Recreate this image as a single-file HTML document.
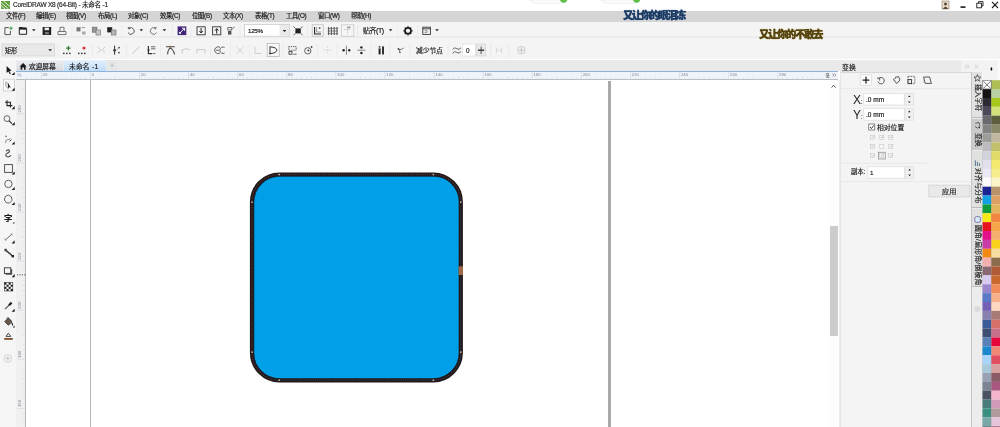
<!DOCTYPE html>
<html lang="zh-CN">
<head>
<meta charset="utf-8">
<title>CorelDRAW X8 (64-Bit) - 未命名 -1</title>
<style>
*{box-sizing:border-box;margin:0;padding:0}
html,body{width:1000px;height:427px;overflow:hidden;background:#fff}
body{position:relative;font-family:"Liberation Sans","Noto Sans CJK SC",sans-serif;font-size:7px;color:#222;line-height:1}
.abs{position:absolute}
.t{position:absolute;white-space:nowrap;line-height:1;will-change:transform;-webkit-text-stroke:0.18px currentColor}
#titlebar{left:0;top:0;width:1000px;height:11px;background:#fff}
#menubar{left:0;top:10.6px;width:1000px;height:11.3px;background:#d5d5d5}
#toolbar{left:0;top:21.9px;width:1000px;height:14.6px;background:#f4f4f4}
#propbar{left:0;top:36.4px;width:1000px;height:23.1px;background:#f4f4f4;border-top:2.4px solid #ececec}
#tabrow{left:0;top:59.5px;width:1000px;height:11.5px;background:#e9e9e9}
#toolbox{left:0;top:59.5px;width:16.4px;height:368px;background:#f5f5f5}
#hruler{left:16.4px;top:70.6px;width:821.6px;height:9.4px;background:#eef4fa;border-top:1.1px solid #8fb3d6;border-bottom:0.8px solid #bdbdbd}
#vruler{left:16.4px;top:80px;width:9.6px;height:347px;background:#f0f0f1;border-right:0.9px solid #b6b6b6}
#canvas{left:25.6px;top:80.2px;width:803.4px;height:347px;background:#fff}
#vscroll{left:829px;top:80px;width:11px;height:347px;background:#fdfdfd;border-right:1.4px solid #ececec}
#panel{left:840px;top:60px;width:132px;height:367px;background:#f3f3f3}
#sidetabs{left:972px;top:60px;width:10px;height:367px;background:#e2e2e2}
#palette{left:982px;top:60px;width:18px;height:367px;background:#f0f0f0}
.mi{top:12.6px;font-size:6.3px;letter-spacing:-0.25px;color:#1a1a1a}
.ic{position:absolute}
.vt{transform-origin:0 0;transform:rotate(90deg);font-size:6.8px;color:#222;letter-spacing:0;line-height:8px}
</style>
</head>
<body>
<div id="titlebar" class="abs"></div>
<div id="menubar" class="abs"></div>
<div id="toolbar" class="abs"></div>
<div id="propbar" class="abs"></div>
<div id="tabrow" class="abs"></div>
<div id="toolbox" class="abs"></div>
<div id="hruler" class="abs"></div>
<div id="vruler" class="abs"></div>
<div id="canvas" class="abs"></div>
<div id="vscroll" class="abs"></div>

<!-- TITLE -->
<svg class="ic" style="left:1px;top:1px" width="9" height="8" viewBox="0 0 9 8"><rect width="9" height="8" fill="#5f9e3c"/><path d="M0 1.5 L7.5 8 M0 4.5 L4 8 M2.5 0 L9 5.5" stroke="#e9f3df" stroke-width="1" fill="none"/></svg>
<div class="t" style="left:13px;top:2px;font-size:6.5px;letter-spacing:-0.2px;color:#2a2a2a">CorelDRAW X8 (64-Bit) - 未命名 -1</div>
<!-- window controls -->
<svg class="ic" style="left:935px;top:0" width="65" height="11" viewBox="935 0 65 11">
<rect x="942" y="1" width="7" height="8" fill="#e9dcc8" stroke="#8a7a66" stroke-width="0.6"/><circle cx="945.5" cy="4" r="1.5" fill="#5a4636"/><path d="M943 9 Q945.5 4.5 948 9Z" fill="#5a4636"/>
<rect x="960.5" y="6.3" width="5" height="1.6" fill="#1a1a1a"/>
<rect x="976.8" y="3.2" width="4.6" height="4.6" fill="none" stroke="#1a1a1a" stroke-width="0.9"/><path d="M978.6 3 V1.6 H983 V6 H981.6" fill="none" stroke="#1a1a1a" stroke-width="0.9"/>
<path d="M992 1.8 L998 8 M998 1.8 L992 8" stroke="#1a1a1a" stroke-width="1.1" fill="none"/>
</svg>
<!-- top floating widgets -->
<svg class="ic" style="left:525px;top:0" width="120" height="5" viewBox="525 0 120 5">
<path d="M530 0 Q531 3 535 3 H562 Q566.5 3 567.5 0Z" fill="#fff" stroke="#eaeaea" stroke-width="0.9"/>
<path d="M601 0 Q602 3 606 3 H635 Q639 3 640 0Z" fill="#fff" stroke="#eaeaea" stroke-width="0.9"/>
<circle cx="563.6" cy="-0.6" r="3.4" fill="#5cbf4a"/><circle cx="636.6" cy="-0.6" r="3.4" fill="#5cbf4a"/>
</svg>

<!-- MENU -->
<div class="t mi" style="left:5.5px">文件(F)</div>
<div class="t mi" style="left:35.8px">编辑(E)</div>
<div class="t mi" style="left:66.2px">视图(V)</div>
<div class="t mi" style="left:97.5px">布局(L)</div>
<div class="t mi" style="left:128px">对象(C)</div>
<div class="t mi" style="left:160px">效果(C)</div>
<div class="t mi" style="left:192px">位图(B)</div>
<div class="t mi" style="left:223px">文本(X)</div>
<div class="t mi" style="left:255px">表格(T)</div>
<div class="t mi" style="left:286px">工具(O)</div>
<div class="t mi" style="left:318px">窗口(W)</div>
<div class="t mi" style="left:351px">帮助(H)</div>
<!-- lyric overlays -->
<div class="t" style="left:623px;top:10.8px;font-size:10.2px;font-weight:900;color:#1d3a62;text-shadow:0 0 0.8px #24507e,0 0 2px #dfe8f4;letter-spacing:-1.35px">又让你的眼泪冻</div>
<div class="t" style="left:759.2px;top:29.8px;font-size:10.2px;font-weight:900;color:#54430f;text-shadow:0 0 0.8px #6a5a1e,0 0 2px #f4ecc0;letter-spacing:-1.15px">又让你的不敢去</div>

<!-- TOOLBARS -->
<!--TBS-->
<svg class="ic" style="left:0;top:21px" width="1000" height="40" viewBox="0 21 1000 40">
<g fill="none" stroke-linecap="butt">
<!-- grips -->
<!-- row1 -->
<!-- new -->
<path d="M8.8 27.6 H4.9 V34.6 H10.4 V30.8" stroke="#444" stroke-width="0.9"/><path d="M11 26.4 V30 M9.2 28.2 H12.8" stroke="#3f9a4a" stroke-width="1"/>
<!-- open -->
<path d="M19.3 34.3 V27.6 H22.5 L23.3 28.8 H26.6 V34.3Z" stroke="#222" stroke-width="1"/><rect x="19.3" y="27.4" width="7.3" height="2.2" fill="#222" stroke="none"/>
<path d="M32 29.3 H35.6 L33.8 31.3Z" fill="#222" stroke="none"/>
<!-- save -->
<rect x="42.6" y="27" width="8.6" height="8" fill="#222" stroke="none"/><rect x="44.6" y="27.6" width="4.4" height="2.6" fill="#f0f0f0" stroke="none"/><rect x="45" y="32" width="3.8" height="2.4" fill="#777" stroke="none"/>
<!-- print -->
<path d="M58 31.5 H66 V34.6 H58Z M60 31.3 V27.3 H64 V31.3" stroke="#666" stroke-width="0.9"/>
<!-- cut/copy/paste -->
<rect x="76.5" y="27.2" width="4" height="4.2" fill="#777" stroke="none"/><rect x="82" y="31.5" width="3.6" height="3" fill="#aaa" stroke="none"/><path d="M81.5 27.6 H85" stroke="#888" stroke-width="0.8"/>
<rect x="92.3" y="27.2" width="4.6" height="5" fill="#999" stroke="#666" stroke-width="0.7"/><rect x="96" y="30" width="4.4" height="5" fill="#c8c8c8" stroke="#777" stroke-width="0.7"/>
<rect x="107.2" y="27.2" width="5" height="5.2" fill="#222" stroke="none"/><rect x="111.4" y="30" width="4.6" height="5" fill="#b5b5b5" stroke="#777" stroke-width="0.7"/>
<!-- undo/redo -->
<path d="M129.2 28.2 A3.3 3.3 0 1 1 128 32.6" stroke="#555" stroke-width="1"/><path d="M127.5 27 L130.6 27.4 L129 29.8Z" fill="#555" stroke="none"/>
<path d="M139.5 29.3 H143.1 L141.3 31.3Z" fill="#222" stroke="none"/>
<path d="M155.3 28.2 A3.3 3.3 0 1 0 156.5 32.6" stroke="#777" stroke-width="1"/><path d="M157 27 L153.9 27.4 L155.5 29.8Z" fill="#777" stroke="none"/>
<path d="M162.6 29.3 H166.2 L164.4 31.3Z" fill="#222" stroke="none"/>
<!-- purple -->
<rect x="177.6" y="26.4" width="8.7" height="8.7" fill="#43267a" stroke="none"/><path d="M179.6 33.2 L184.4 28.4 M182 28.2 H184.6 V30.8" stroke="#fff" stroke-width="1"/><rect x="179.2" y="32" width="1.8" height="1.8" fill="#fff" stroke="none"/>
<!-- import / export -->
<rect x="197" y="26.8" width="8.2" height="8" stroke="#333" stroke-width="0.9"/><path d="M201.1 28 V32.6 M199.4 31 L201.1 33 L202.8 31" stroke="#222" stroke-width="1"/>
<rect x="212.6" y="26.8" width="8.2" height="8" stroke="#333" stroke-width="0.9"/><path d="M216.7 33.6 V29 M215 30.6 L216.7 28.6 L218.4 30.6" stroke="#222" stroke-width="1"/>
<!-- pdf -->
<rect x="227.8" y="27.6" width="4" height="2.4" stroke="#555" stroke-width="0.8"/><rect x="228" y="31" width="3.4" height="3.6" fill="#555" stroke="none"/><path d="M232.5 28.6 L234.6 27" stroke="#555" stroke-width="0.9"/>
<!-- zoom combo -->
<rect x="244.6" y="24.6" width="44.8" height="11.6" fill="#fff" stroke="#c6c6c6" stroke-width="0.7"/><rect x="279.6" y="25" width="9.5" height="10.8" fill="#e9e9e9" stroke="none"/>
<path d="M282.6 30 H286.4 L284.5 32.1Z" fill="#222" stroke="none"/>
<!-- fullscreen -->
<rect x="295.4" y="28.4" width="5.4" height="5" fill="#222" stroke="none"/><path d="M293.6 26.6 L295.4 28.4 M302.6 26.6 L300.8 28.4 M293.6 35.2 L295.4 33.4 M302.6 35.2 L300.8 33.4" stroke="#444" stroke-width="0.9"/>
<!-- snap icons -->
<rect x="312.2" y="24.8" width="11" height="11.4" fill="#f6f6f6" stroke="#b5b5b5" stroke-width="0.7"/><path d="M314.6 27 V34 H321" stroke="#222" stroke-width="1.1"/><path d="M316.6 27 V32 H321" stroke="#777" stroke-width="0.7"/><circle cx="319.6" cy="28" r="1" fill="#666" stroke="none"/>
<g stroke="#555" stroke-width="1.1"><path d="M328.6 27 V35 M331.4 27 V35 M334.2 27 V35 M337 27 V35"/></g><g stroke="#666" stroke-width="0.7"><path d="M327.6 28.4 H338 M327.6 31 H338 M327.6 33.6 H338"/></g>
<rect x="341.4" y="24.8" width="12.4" height="11.4" fill="#f6f6f6" stroke="#c2c2c2" stroke-width="0.7"/><path d="M344 29.6 H351 M347.6 27 V34.4" stroke="#b0b0b0" stroke-width="0.8" stroke-dasharray="1 0.8"/><rect x="347" y="26.6" width="3.6" height="1.6" fill="#9a9a9a" stroke="none"/>
<path d="M388.8 29.3 H392.4 L390.6 31.3Z" fill="#222" stroke="none"/>
<!-- gear -->
<circle cx="408" cy="30.8" r="3" stroke="#1a1a1a" stroke-width="1.7"/><g stroke="#1a1a1a" stroke-width="1.3"><path d="M408 26.2 V27.4 M408 34.2 V35.4 M403.4 30.8 H404.6 M411.4 30.8 H412.6 M404.8 27.6 L405.6 28.4 M411.2 27.6 L410.4 28.4 M404.8 34 L405.6 33.2 M411.2 34 L410.4 33.2"/></g>
<!-- window icon -->
<rect x="422.8" y="27.2" width="7.6" height="7.2" stroke="#333" stroke-width="0.9"/><path d="M422.8 28.8 H430.4" stroke="#333" stroke-width="0.9"/><path d="M424.6 30.6 H427 V32.4 H424.6" stroke="#555" stroke-width="0.6"/>
<path d="M435.2 29.3 H438.8 L437 31.3Z" fill="#222" stroke="none"/>
<!-- separators row1 -->
<g stroke="#e6e6e6" stroke-width="0.7"><path d="M72 25 V37 M122 25 V37 M172.5 25 V37 M191 25 V37 M240 25 V37 M307.5 25 V37 M357.5 25 V37 M397.5 25 V37 M417.5 25 V37"/></g>

<!-- row2 -->
<rect x="2" y="44" width="52.4" height="12" fill="#e9e9e9" stroke="#d0d0d0" stroke-width="0.7"/>
<path d="M48.2 49.2 H52 L50.1 51.3Z" fill="#222" stroke="none"/>
<!-- add node / delete node -->
<g fill="#3c3c3c" stroke="none"><circle cx="63.8" cy="53.3" r="0.9"/><circle cx="66.8" cy="53.3" r="0.9"/><circle cx="69.8" cy="53.3" r="0.9"/><circle cx="78.8" cy="53.3" r="0.9"/><circle cx="81.8" cy="53.3" r="0.9"/><circle cx="84.8" cy="53.3" r="0.9"/></g>
<path d="M68.4 46 V50.4 M66.2 48.2 H70.6" stroke="#2e7d32" stroke-width="1.3"/>
<circle cx="84" cy="48" r="1.6" fill="#d23a3a" stroke="none"/>
<!-- join/break -->
<path d="M97.5 47 L101 50 L97.5 53 M105 47 L102 50 L105 53" stroke="#c8c8c8" stroke-width="0.9"/>
<path d="M114.6 45.6 V54.6" stroke="#333" stroke-width="1"/><circle cx="114.6" cy="50.2" r="1.3" fill="#333" stroke="none"/><circle cx="119" cy="47.6" r="0.9" fill="#444" stroke="none"/><circle cx="119" cy="52.6" r="0.9" fill="#444" stroke="none"/><path d="M116.6 50.2 L118.6 48.4" stroke="#666" stroke-width="0.6"/>
<path d="M132.4 53.6 L139.6 46.6" stroke="#c4c4c4" stroke-width="1"/>
<path d="M148.4 46 V53.6 H152" stroke="#333" stroke-width="1.2"/><path d="M151 46.8 H155.4 M151 48.8 H155.4 M152.6 53.6 H155.4" stroke="#444" stroke-width="0.8"/><circle cx="148.6" cy="50" r="1.1" fill="#333" stroke="none"/>
<path d="M167.6 54.4 Q168 48.6 170.4 48.2 Q173 48.6 174.6 54.4 M166 46.8 H174.8" stroke="#4a4a4a" stroke-width="1.1"/><circle cx="170.4" cy="46.8" r="1" fill="#7a5a3a" stroke="none"/>
<path d="M182 53.6 V50 L186 48.6 L190 50" stroke="#c8c8c8" stroke-width="1"/>
<path d="M197 53.4 V49.6 H205 V53.4" stroke="#c8c8c8" stroke-width="1"/>
<path d="M220 47.4 A3.4 3.4 0 1 0 220 53 M224.6 47.4 A3.2 3.2 0 1 0 224.6 53 M215.8 50.2 H219" stroke="#555" stroke-width="0.9"/>
<path d="M236.6 47 L243.4 53.4 M243.4 47 L236.6 53.4" stroke="#d0d0d0" stroke-width="1"/>
<path d="M255 46.6 V53.4 H261.6" stroke="#cfcfcf" stroke-width="1"/>
<rect x="267.2" y="43.6" width="12" height="12.8" fill="#f8f8f8" stroke="#b0b0b0" stroke-width="0.7"/><path d="M270 46.4 V53.8 M270 46.8 Q277 47.4 276.8 50.2 Q276.6 53 270.4 53.6" stroke="#333" stroke-width="1"/><circle cx="270" cy="53.6" r="0.9" fill="#333" stroke="none"/>
<rect x="288.8" y="46.6" width="7.4" height="3.6" stroke="#444" stroke-width="0.8" stroke-dasharray="1.4 0.7"/><rect x="289" y="51.6" width="3" height="2.6" stroke="#333" stroke-width="0.8"/><path d="M293.4 54.2 H296.6" stroke="#444" stroke-width="0.8"/>
<circle cx="307.8" cy="50.8" r="3.2" stroke="#555" stroke-width="0.9"/><circle cx="308.4" cy="50.6" r="1" fill="#444" stroke="none"/><circle cx="311.6" cy="47" r="0.9" fill="#444" stroke="none"/>
<path d="M323 50 H332 M327.6 46.4 V53.6" stroke="#d4d4d4" stroke-width="0.9" stroke-dasharray="1.6 1"/>
<path d="M346.4 45.6 V54.8" stroke="#555" stroke-width="0.7"/><circle cx="343.6" cy="50.2" r="1.2" fill="#222" stroke="none"/><circle cx="349.2" cy="50.2" r="1.2" fill="#222" stroke="none"/>
<path d="M357.4 50.2 H365.4" stroke="#555" stroke-width="0.7"/><circle cx="361.4" cy="47.4" r="1.2" fill="#222" stroke="none"/><circle cx="361.4" cy="53" r="1.2" fill="#222" stroke="none"/>
<rect x="378.6" y="48.4" width="2" height="6" fill="#222" stroke="none"/><rect x="382" y="46.4" width="2" height="8" fill="#333" stroke="none"/><circle cx="379.6" cy="46.8" r="0.9" fill="#333" stroke="none"/>
<path d="M398 49.4 H401.4 L403.6 48 M399.6 49.4 V52.6" stroke="#555" stroke-width="0.8"/><circle cx="398.4" cy="48.8" r="0.9" fill="#444" stroke="none"/><circle cx="400" cy="52.4" r="0.8" fill="#666" stroke="none"/>
<path d="M452.6 49.6 Q454.6 46.6 456.8 48.6 T461 47.8 M452.6 53.4 Q454.6 50.4 456.8 52.4 T461 51.6" stroke="#555" stroke-width="0.9"/>
<rect x="462.6" y="44" width="13" height="12" fill="#fff" stroke="#d6d6d6" stroke-width="0.6"/>
<rect x="476.4" y="44" width="9.4" height="12" fill="#e8e8e8" stroke="#cfcfcf" stroke-width="0.6"/><path d="M478 50.2 H484.2" stroke="#222" stroke-width="1.3"/><path d="M481.1 46.6 V54" stroke="#444" stroke-width="0.9"/>
<path d="M496.4 47.6 V53 M501.6 47.6 V53 M497.4 50.2 H500.6" stroke="#d2d2d2" stroke-width="0.9"/>
<circle cx="521.4" cy="50.2" r="3.8" stroke="#c4c4c4" stroke-width="0.8"/><path d="M518.6 50.2 H524.2 M521.4 47.4 V53" stroke="#bdbdbd" stroke-width="0.9"/>
<g stroke="#e6e6e6" stroke-width="0.7"><path d="M58 44 V57 M92.5 44 V57 M126.5 44 V57 M160.5 44 V57 M210.5 44 V57 M230.5 44 V57 M249.5 44 V57 M283 44 V57 M317.5 44 V57 M337 44 V57 M371 44 V57 M389.5 44 V57 M410 44 V57 M448 44 V57 M490.6 44 V57 M508.8 44 V57"/></g>
</g>
</svg>
<div class="t" style="left:247.5px;top:27.6px;font-size:6.2px;letter-spacing:-0.3px;color:#222">125%</div>
<div class="t" style="left:362.5px;top:27.2px;font-size:7px;letter-spacing:-0.45px;color:#1a1a1a">贴齐(T)</div>
<div class="t" style="left:5px;top:47.7px;font-size:6.3px;letter-spacing:-0.3px;color:#222">矩形</div>
<div class="t" style="left:415.6px;top:47.5px;font-size:6.8px;letter-spacing:-0.1px;color:#222">减少节点</div>
<div class="t" style="left:465.5px;top:47.7px;font-size:6.3px;color:#222">0</div>
<!--TBE-->

<!-- TABS -->
<div class="abs" style="left:17px;top:60.4px;width:45.6px;height:10.6px;background:linear-gradient(#eceef1,#d3d9e0)"></div>
<div class="abs" style="left:63.6px;top:60.4px;width:42.2px;height:10.6px;background:linear-gradient(#e4f0fc,#bddcf8)"></div>
<div class="abs" style="left:107px;top:60px;width:10.4px;height:11px;background:#e4e6e9"></div>
<svg class="ic" style="left:19px;top:61px" width="9" height="10" viewBox="19 61 9 10"><path d="M19.6 66.6 L23.1 63 L26.6 66.6 H25.6 V69.8 H24 V67.4 H22.2 V69.8 H20.6 V66.6Z" fill="#1a1a1a"/></svg>
<div class="t" style="left:28.6px;top:63.9px;font-size:6.7px;letter-spacing:0;color:#1a1a1a">欢迎屏幕</div>
<div class="t" style="left:68.6px;top:63.9px;font-size:6.7px;letter-spacing:0.25px;color:#1a1a1a">未命名 -1</div>
<div class="t" style="left:110px;top:62px;font-size:7px;color:#b8b8b8">+</div>
<!-- TOOLBOX -->
<svg class="ic" style="left:0;top:60px" width="17" height="367" viewBox="0 60 17 367">
<g fill="none">
<!-- pick -->
<path d="M6.6 66 V73 L8.4 71.4 L9.8 74.2 L10.8 73.7 L9.5 71 L11.6 70.8Z" fill="#1a1a1a"/>
<path d="M11.6 75.0 H14.7 V71.9Z" fill="#1a1a1a"/>
<!-- shape (selected) -->
<rect x="3.4" y="79.2" width="11.2" height="11.8" fill="#fafafa" stroke="#c4c4c4" stroke-width="0.7"/>
<path d="M6 81.6 Q4.6 86 8.4 89" stroke="#777" stroke-width="0.8"/><path d="M7.6 82 L10.8 87.8 L9.2 87.2 L8.2 88.6Z" fill="#222"/>
<path d="M11.6 90.8 H14.7 V87.7Z" fill="#1a1a1a"/>
<!-- crop -->
<path d="M7 100.2 V105.6 H12.4 M5 102.2 H10.4 V107.6" stroke="#222" stroke-width="1.1"/>
<path d="M11.6 109.2 H14.7 V106.1Z" fill="#1a1a1a"/>
<!-- zoom -->
<circle cx="7" cy="118.6" r="2.9" stroke="#555" stroke-width="0.9"/><path d="M9 120.8 L12 123.6" stroke="#333" stroke-width="1.2"/>
<path d="M11.6 125.2 H14.7 V122.1Z" fill="#1a1a1a"/>
<!-- freehand -->
<path d="M5.4 143 Q6 139 7.6 139.6 T10.6 138.4" stroke="#777" stroke-width="0.9"/><circle cx="6" cy="136.4" r="0.8" fill="#666"/><path d="M9.6 141.4 L11.4 139.6" stroke="#444" stroke-width="1"/>
<path d="M11.6 144.6 H14.7 V141.5Z" fill="#1a1a1a"/>
<!-- artistic -->
<path d="M6 151.2 Q8.6 148.6 9.4 150.6 Q9.8 152.6 7 153.4 Q5 154.6 6.4 156.4 Q8.6 158 11 155.4" stroke="#444" stroke-width="1.1"/>
<!-- rect -->
<rect x="4.6" y="164.6" width="7.8" height="7.8" stroke="#444" stroke-width="0.9"/>
<path d="M11.6 174.6 H14.7 V171.5Z" fill="#1a1a1a"/>
<!-- ellipse -->
<circle cx="8.4" cy="183.9" r="3.7" stroke="#555" stroke-width="0.9"/>
<path d="M11.6 190.0 H14.7 V186.9Z" fill="#1a1a1a"/>
<!-- polygon -->
<path d="M8.2 195 L11.4 196.8 L12 200.4 L9.6 203 L6.4 202.8 L4.4 200 L5.2 196.6Z" stroke="#555" stroke-width="0.9"/>
<path d="M11.6 205.0 H14.7 V201.9Z" fill="#1a1a1a"/>
<path d="M12.6 223.6 H14.4 V221.8Z" fill="#1a1a1a"/>
<!-- dimension -->
<path d="M5 240.2 L11.8 234.2" stroke="#555" stroke-width="0.9"/><path d="M4.4 238.6 L6 240.8 M11 233 L12.6 235.2" stroke="#777" stroke-width="0.6"/>
<path d="M11.6 243.4 H14.7 V240.3Z" fill="#1a1a1a"/>
<!-- connector -->
<path d="M5.6 250.2 L12.6 256" stroke="#3a3a3a" stroke-width="1.5"/><rect x="4.4" y="248.8" width="2.4" height="2.4" fill="#444"/><rect x="11.6" y="255" width="2.4" height="2.4" fill="#222"/>
<!-- shadow -->
<rect x="5.8" y="269.2" width="6.4" height="5.6" fill="#555"/><rect x="4.4" y="267.8" width="6.4" height="5.6" fill="#f4f4f4" stroke="#333" stroke-width="0.9"/>
<path d="M11.6 277.2 H14.7 V274.1Z" fill="#1a1a1a"/>
<!-- transparency -->
<rect x="4.4" y="282.6" width="8.4" height="8.4" fill="#fff" stroke="#333" stroke-width="0.6"/>
<g fill="#222"><rect x="4.4" y="282.6" width="2.1" height="2.1"/><rect x="8.6" y="282.6" width="2.1" height="2.1"/><rect x="6.5" y="284.7" width="2.1" height="2.1"/><rect x="10.7" y="284.7" width="2.1" height="2.1"/><rect x="4.4" y="286.8" width="2.1" height="2.1"/><rect x="8.6" y="286.8" width="2.1" height="2.1"/><rect x="6.5" y="288.9" width="2.1" height="2.1"/><rect x="10.7" y="288.9" width="2.1" height="2.1"/></g>
<!-- eyedropper -->
<path d="M5 309.2 L9.6 304.6" stroke="#555" stroke-width="1.2"/><path d="M9 305.2 L11.6 302.6" stroke="#222" stroke-width="2.2"/>
<path d="M11.6 311.8 H14.7 V308.7Z" fill="#1a1a1a"/>
<!-- fill -->
<path d="M4.8 321.6 L8.4 318 L12 321.6 L8.4 325.2Z" fill="#6b5a4a" stroke="#2a2a2a" stroke-width="0.9"/><path d="M6.6 318.8 Q7.4 316.6 9 318.4" stroke="#333" stroke-width="0.7"/><path d="M11.6 322.6 Q13 324.4 12.4 325.6" stroke="#222" stroke-width="1.2"/>
<path d="M12.6 327.6 H14.6 V325.6Z" fill="#1a1a1a"/>
<!-- smart fill -->
<path d="M6 336.4 L8.4 333.2 L10.8 336.4Z" stroke="#333" stroke-width="0.9"/><rect x="4.2" y="338" width="8.6" height="1.8" fill="#7b4f2e"/>
<!-- plus circle -->
<circle cx="7.8" cy="358.5" r="3.8" stroke="#c6c6c6" stroke-width="0.7"/><path d="M5.6 358.5 H10 M7.8 356.3 V360.7" stroke="#bdbdbd" stroke-width="0.8"/>
</g>
</svg>
<div class="t" style="left:4.3px;top:214px;font-size:8.4px;font-weight:700;color:#1a1a1a">字</div>
<!-- RULERS -->
<svg class="ic" style="left:0;top:60px" width="840" height="367" viewBox="0 60 840 367" font-family="Liberation Sans, sans-serif">
<path d="M41.3 72 V79.8 M46.2 77.6 V79.8 M51.1 77.6 V79.8 M56.0 77.6 V79.8 M60.9 77.6 V79.8 M65.9 76.4 V79.8 M70.8 77.6 V79.8 M75.7 77.6 V79.8 M80.6 77.6 V79.8 M85.5 77.6 V79.8 M90.4 72 V79.8 M95.3 77.6 V79.8 M100.2 77.6 V79.8 M105.1 77.6 V79.8 M110.0 77.6 V79.8 M115.0 76.4 V79.8 M119.9 77.6 V79.8 M124.8 77.6 V79.8 M129.7 77.6 V79.8 M134.6 77.6 V79.8 M139.5 72 V79.8 M144.4 77.6 V79.8 M149.3 77.6 V79.8 M154.2 77.6 V79.8 M159.1 77.6 V79.8 M164.1 76.4 V79.8 M169.0 77.6 V79.8 M173.9 77.6 V79.8 M178.8 77.6 V79.8 M183.7 77.6 V79.8 M188.6 72 V79.8 M193.5 77.6 V79.8 M198.4 77.6 V79.8 M203.3 77.6 V79.8 M208.2 77.6 V79.8 M213.2 76.4 V79.8 M218.1 77.6 V79.8 M223.0 77.6 V79.8 M227.9 77.6 V79.8 M232.8 77.6 V79.8 M237.7 72 V79.8 M242.6 77.6 V79.8 M247.5 77.6 V79.8 M252.4 77.6 V79.8 M257.3 77.6 V79.8 M262.2 76.4 V79.8 M267.2 77.6 V79.8 M272.1 77.6 V79.8 M277.0 77.6 V79.8 M281.9 77.6 V79.8 M286.8 72 V79.8 M291.7 77.6 V79.8 M296.6 77.6 V79.8 M301.5 77.6 V79.8 M306.4 77.6 V79.8 M311.4 76.4 V79.8 M316.3 77.6 V79.8 M321.2 77.6 V79.8 M326.1 77.6 V79.8 M331.0 77.6 V79.8 M335.9 72 V79.8 M340.8 77.6 V79.8 M345.7 77.6 V79.8 M350.6 77.6 V79.8 M355.5 77.6 V79.8 M360.4 76.4 V79.8 M365.4 77.6 V79.8 M370.3 77.6 V79.8 M375.2 77.6 V79.8 M380.1 77.6 V79.8 M385.0 72 V79.8 M389.9 77.6 V79.8 M394.8 77.6 V79.8 M399.7 77.6 V79.8 M404.6 77.6 V79.8 M409.6 76.4 V79.8 M414.5 77.6 V79.8 M419.4 77.6 V79.8 M424.3 77.6 V79.8 M429.2 77.6 V79.8 M434.1 72 V79.8 M439.0 77.6 V79.8 M443.9 77.6 V79.8 M448.8 77.6 V79.8 M453.7 77.6 V79.8 M458.7 76.4 V79.8 M463.6 77.6 V79.8 M468.5 77.6 V79.8 M473.4 77.6 V79.8 M478.3 77.6 V79.8 M483.2 72 V79.8 M488.1 77.6 V79.8 M493.0 77.6 V79.8 M497.9 77.6 V79.8 M502.8 77.6 V79.8 M507.8 76.4 V79.8 M512.7 77.6 V79.8 M517.6 77.6 V79.8 M522.5 77.6 V79.8 M527.4 77.6 V79.8 M532.3 72 V79.8 M537.2 77.6 V79.8 M542.1 77.6 V79.8 M547.0 77.6 V79.8 M551.9 77.6 V79.8 M556.9 76.4 V79.8 M561.8 77.6 V79.8 M566.7 77.6 V79.8 M571.6 77.6 V79.8 M576.5 77.6 V79.8 M581.4 72 V79.8 M586.3 77.6 V79.8 M591.2 77.6 V79.8 M596.1 77.6 V79.8 M601.0 77.6 V79.8 M605.9 76.4 V79.8 M610.9 77.6 V79.8 M615.8 77.6 V79.8 M620.7 77.6 V79.8 M625.6 77.6 V79.8 M630.5 72 V79.8 M635.4 77.6 V79.8 M640.3 77.6 V79.8 M645.2 77.6 V79.8 M650.1 77.6 V79.8 M655.0 76.4 V79.8 M660.0 77.6 V79.8 M664.9 77.6 V79.8 M669.8 77.6 V79.8 M674.7 77.6 V79.8 M679.6 72 V79.8 M684.5 77.6 V79.8 M689.4 77.6 V79.8 M694.3 77.6 V79.8 M699.2 77.6 V79.8 M704.1 76.4 V79.8 M709.1 77.6 V79.8 M714.0 77.6 V79.8 M718.9 77.6 V79.8 M723.8 77.6 V79.8 M728.7 72 V79.8 M733.6 77.6 V79.8 M738.5 77.6 V79.8 M743.4 77.6 V79.8 M748.3 77.6 V79.8 M753.2 76.4 V79.8 M758.2 77.6 V79.8 M763.1 77.6 V79.8 M768.0 77.6 V79.8 M772.9 77.6 V79.8 M777.8 72 V79.8 M782.7 77.6 V79.8 M787.6 77.6 V79.8 M792.5 77.6 V79.8 M797.4 77.6 V79.8 M802.3 76.4 V79.8 M807.3 77.6 V79.8 M812.2 77.6 V79.8 M817.1 77.6 V79.8 M822.0 77.6 V79.8 M36.4 77.6 V79.8 M31.5 77.6 V79.8 M26.6 77.6 V79.8" stroke="#c6ccd6" stroke-width="0.5" fill="none"/>
<path d="M17 113.8 H25.4 M23.2 84.3 H25.4 M22 89.3 H25.4 M23.2 94.2 H25.4 M23.2 99.1 H25.4 M23.2 104.0 H25.4 M23.2 108.9 H25.4 M17 162.9 H25.4 M23.2 118.7 H25.4 M23.2 123.6 H25.4 M23.2 128.5 H25.4 M23.2 133.4 H25.4 M22 138.3 H25.4 M23.2 143.3 H25.4 M23.2 148.2 H25.4 M23.2 153.1 H25.4 M23.2 158.0 H25.4 M17 212.0 H25.4 M23.2 167.8 H25.4 M23.2 172.7 H25.4 M23.2 177.6 H25.4 M23.2 182.5 H25.4 M22 187.4 H25.4 M23.2 192.4 H25.4 M23.2 197.3 H25.4 M23.2 202.2 H25.4 M23.2 207.1 H25.4 M17 261.1 H25.4 M23.2 216.9 H25.4 M23.2 221.8 H25.4 M23.2 226.7 H25.4 M23.2 231.6 H25.4 M22 236.6 H25.4 M23.2 241.5 H25.4 M23.2 246.4 H25.4 M23.2 251.3 H25.4 M23.2 256.2 H25.4 M17 310.2 H25.4 M23.2 266.0 H25.4 M23.2 270.9 H25.4 M23.2 275.8 H25.4 M23.2 280.7 H25.4 M22 285.6 H25.4 M23.2 290.6 H25.4 M23.2 295.5 H25.4 M23.2 300.4 H25.4 M23.2 305.3 H25.4 M17 359.3 H25.4 M23.2 315.1 H25.4 M23.2 320.0 H25.4 M23.2 324.9 H25.4 M23.2 329.8 H25.4 M22 334.7 H25.4 M23.2 339.7 H25.4 M23.2 344.6 H25.4 M23.2 349.5 H25.4 M23.2 354.4 H25.4 M17 408.4 H25.4 M23.2 364.2 H25.4 M23.2 369.1 H25.4 M23.2 374.0 H25.4 M23.2 378.9 H25.4 M22 383.9 H25.4 M23.2 388.8 H25.4 M23.2 393.7 H25.4 M23.2 398.6 H25.4 M23.2 403.5 H25.4 M23.2 413.3 H25.4 M23.2 418.2 H25.4 M23.2 423.1 H25.4 M23.2 428.0 H25.4" stroke="#c6ccd6" stroke-width="0.5" fill="none"/>
<text x="42.6" y="76.4" font-size="4.3" fill="#7f8792">20</text><text x="91.7" y="76.4" font-size="4.3" fill="#7f8792">0</text><text x="140.8" y="76.4" font-size="4.3" fill="#7f8792">20</text><text x="189.9" y="76.4" font-size="4.3" fill="#7f8792">40</text><text x="239.0" y="76.4" font-size="4.3" fill="#7f8792">60</text><text x="288.1" y="76.4" font-size="4.3" fill="#7f8792">80</text><text x="337.2" y="76.4" font-size="4.3" fill="#7f8792">100</text><text x="386.3" y="76.4" font-size="4.3" fill="#7f8792">120</text><text x="435.4" y="76.4" font-size="4.3" fill="#7f8792">140</text><text x="484.5" y="76.4" font-size="4.3" fill="#7f8792">160</text><text x="533.6" y="76.4" font-size="4.3" fill="#7f8792">180</text><text x="582.7" y="76.4" font-size="4.3" fill="#7f8792">200</text><text x="631.8" y="76.4" font-size="4.3" fill="#7f8792">220</text><text x="680.9" y="76.4" font-size="4.3" fill="#7f8792">240</text><text x="730.0" y="76.4" font-size="4.3" fill="#7f8792">260</text><text x="779.1" y="76.4" font-size="4.3" fill="#7f8792">280</text>
<text transform="translate(21.4 112.5) rotate(-90)" font-size="4.3" fill="#7f8792">280</text><text transform="translate(21.4 161.6) rotate(-90)" font-size="4.3" fill="#7f8792">260</text><text transform="translate(21.4 210.7) rotate(-90)" font-size="4.3" fill="#7f8792">240</text><text transform="translate(21.4 259.8) rotate(-90)" font-size="4.3" fill="#7f8792">220</text><text transform="translate(21.4 308.9) rotate(-90)" font-size="4.3" fill="#7f8792">200</text><text transform="translate(21.4 358.0) rotate(-90)" font-size="4.3" fill="#7f8792">180</text><text transform="translate(21.4 407.1) rotate(-90)" font-size="4.3" fill="#7f8792">160</text>
<text x="825.6" y="76.6" font-size="4.2" fill="#444" font-family="Liberation Sans, Noto Sans CJK SC, sans-serif">毫</text>
<path d="M832.4 73.6 L834 75 L832.4 76.4 M834.4 73.6 L836 75 L834.4 76.4" stroke="#666" stroke-width="0.6" fill="none"/>
<path d="M17 274.8 H25.4" stroke="#333" stroke-width="0.8" stroke-dasharray="1.2 1.2"/>
<path d="M17.6 74.2 H21.2 M17.6 75.8 H21.2 M18.6 73.4 L17.6 74.2 L18.6 75 M20.2 75 L21.2 75.8 L20.2 76.6" stroke="#9aa3b0" stroke-width="0.5" fill="none"/>
</svg>
<!-- CANVAS CONTENT -->
<div class="abs" style="left:90px;top:80px;width:0.8px;height:347px;background:#b4b4b4"></div>
<div class="abs" style="left:607.6px;top:80.6px;width:3.5px;height:347px;background:#a9a9a9"></div>
<svg class="ic" style="left:240px;top:165px" width="235" height="225" viewBox="240 165 235 225">
<rect x="252" y="174.5" width="208.8" height="205.8" rx="27.5" ry="27.5" fill="#00a0e9" stroke="#211618" stroke-width="4.2"/>
<rect x="252" y="174.5" width="208.8" height="205.8" rx="27.5" ry="27.5" fill="none" stroke="#553732" stroke-width="1.4" stroke-dasharray="1 1.2"/>
<rect x="252.9" y="175.4" width="207" height="204" rx="26.6" ry="26.6" fill="none" stroke="#0b2c4e" stroke-width="0.9" stroke-opacity="0.55" transform="translate(0.9 0.9)"/>
<g fill="#c9b9a9"><rect x="251.3" y="201.4" width="1.5" height="1.5"/><rect x="278.4" y="173.8" width="1.5" height="1.5"/><rect x="432.6" y="173.8" width="1.5" height="1.5"/><rect x="460" y="201.4" width="1.5" height="1.5"/><rect x="460" y="351.4" width="1.5" height="1.5"/><rect x="432.6" y="379.5" width="1.5" height="1.5"/><rect x="278.4" y="379.5" width="1.5" height="1.5"/><rect x="251.3" y="351.4" width="1.5" height="1.5"/></g>
<rect x="458.6" y="266.4" width="4.4" height="8.6" fill="#a06848"/>
</svg>
<div class="abs" style="left:829.6px;top:225.6px;width:8px;height:110.2px;background:#cccccc"></div>
<svg class="ic" style="left:829px;top:80px" width="10" height="12" viewBox="829 80 10 12"><path d="M831.6 87.6 L833.6 85.2 L835.6 87.6" stroke="#555" stroke-width="1" fill="none"/></svg>
<!-- PANEL -->
<div class="abs" style="left:840px;top:59.5px;width:160px;height:12.2px;background:#f2f2f2"></div>
<div class="abs" style="left:840px;top:59.5px;width:121px;height:12.2px;background:#eaeaea"></div>
<div class="abs" style="left:840px;top:71.6px;width:131.6px;height:356px;background:#f4f4f4;border-left:0.7px solid #e6e6e6;border-top:0.7px solid #d8d8d8"></div>
<div class="abs" style="left:971.4px;top:71.6px;width:0.9px;height:356px;background:#c4c4c4"></div>
<div class="t" style="left:841.6px;top:64.6px;font-size:6.9px;color:#1a1a1a">变换</div>
<svg class="ic" style="left:840px;top:60px" width="143" height="150" viewBox="840 60 143 150">
<g fill="none">
<path d="M965 65 L966.8 66.7 L965 68.4 M967.2 65 L969 66.7 L967.2 68.4" stroke="#bdbdbd" stroke-width="0.7"/>
<path d="M974.8 65 L978.2 68.4 M978.2 65 L974.8 68.4" stroke="#c2c2c2" stroke-width="0.7"/>
<!-- icons row -->
<rect x="860.2" y="74.8" width="11.4" height="10.6" fill="#fafafa" stroke="#d4d4d4" stroke-width="0.6"/>
<path d="M862.6 80.2 H869.4 M866 76.8 V83.6" stroke="#222" stroke-width="1.3"/>
<path d="M878.6 78.6 A3.2 3.2 0 1 1 878 81.6" stroke="#444" stroke-width="0.9"/><path d="M877 78.2 H879.6 V80.6" stroke="#444" stroke-width="0.8"/>
<path d="M895 77.4 L898.6 76.6 L900 80 L897 83.4 L894.4 81.4" stroke="#444" stroke-width="0.9"/><path d="M893 79.6 L896 78 M893 79.6 L895.6 81" stroke="#555" stroke-width="0.7"/>
<rect x="908" y="76.4" width="6.8" height="7.2" stroke="#555" stroke-width="0.8" stroke-dasharray="1.6 0.8"/><rect x="908" y="79.6" width="3.6" height="4" fill="#eee" stroke="#333" stroke-width="0.9"/>
<path d="M923.6 77 H929.6 L931.4 83.4 H925.2Z" stroke="#444" stroke-width="0.9"/><path d="M923.4 76.6 V83.6" stroke="#999" stroke-width="0.5" stroke-dasharray="1 0.8"/>
<path d="M841 88.6 H971" stroke="#e4e4e4" stroke-width="0.7"/>
<!-- X Y inputs -->
<rect x="863.8" y="93.4" width="40.4" height="11.6" fill="#fff" stroke="#d8d8d8" stroke-width="0.6"/>
<rect x="905" y="93.4" width="8.4" height="11.6" fill="#f0f0f0" stroke="#d8d8d8" stroke-width="0.6"/>
<path d="M908 97 H910.6 L909.3 95.4Z M908 101.4 H910.6 L909.3 103Z" fill="#222"/>
<rect x="863.8" y="108.6" width="40.4" height="11.6" fill="#fff" stroke="#d8d8d8" stroke-width="0.6"/>
<rect x="905" y="108.6" width="8.4" height="11.6" fill="#f0f0f0" stroke="#d8d8d8" stroke-width="0.6"/>
<path d="M908 112.2 H910.6 L909.3 110.6Z M908 116.6 H910.6 L909.3 118.2Z" fill="#222"/>
<!-- checkbox -->
<rect x="868.8" y="124" width="6" height="6" fill="#fff" stroke="#555" stroke-width="0.7"/><path d="M870 127 L871.4 128.6 L873.8 125.4" stroke="#222" stroke-width="0.9"/>
<!-- 3x3 -->
<g stroke="#b8b8b8" stroke-width="0.5" fill="#fbfbfb">
<rect x="870.6" y="135.2" width="4" height="4"/><rect x="879.8" y="135.2" width="4" height="4"/><rect x="888.8" y="135.2" width="4" height="4"/>
<rect x="870.6" y="144.4" width="4" height="4"/><rect x="879.8" y="144.4" width="4" height="4"/><rect x="888.8" y="144.4" width="4" height="4"/>
<rect x="870.6" y="153.6" width="4" height="4"/><rect x="879.8" y="153.6" width="4" height="4"/><rect x="888.8" y="153.6" width="4" height="4"/>
</g>
<g stroke="#999" stroke-width="0.6"><path d="M871.6 137 L872.4 138 L873.8 136.2 M880.8 137 L881.6 138 L883 136.2 M889.8 137 L890.6 138 L892 136.2 M871.6 146.2 L872.4 147.2 L873.8 145.4 M889.8 146.2 L890.6 147.2 L892 145.4 M871.6 155.4 L872.4 156.4 L873.8 154.6 M880.8 155.4 L881.6 156.4 L883 154.6 M889.8 155.4 L890.6 156.4 L892 154.6"/></g>
<rect x="878.4" y="152.2" width="6.8" height="6.8" stroke="#777" stroke-width="0.6"/>
<path d="M841 163.2 H928" stroke="#e2e2e2" stroke-width="0.7"/>
<!-- copies -->
<rect x="867.8" y="166.8" width="36.6" height="11.4" fill="#fff" stroke="#d8d8d8" stroke-width="0.6"/>
<rect x="905.4" y="166.8" width="8.4" height="11.4" fill="#f0f0f0" stroke="#d8d8d8" stroke-width="0.6"/>
<path d="M908.3 170.4 H910.9 L909.6 168.8Z M908.3 174.6 H910.9 L909.6 176.2Z" fill="#222"/>
<path d="M841 181.6 H970" stroke="#e2e2e2" stroke-width="0.7"/>
<!-- apply -->
<rect x="928.8" y="185.2" width="41" height="11.8" fill="#e9e9e9" stroke="#a8a8a8" stroke-width="0.6" stroke-dasharray="1 0.8"/>
</g>
</svg>
<div class="t" style="left:853px;top:93.6px;font-size:12px;color:#222;letter-spacing:-0.3px;-webkit-text-stroke:0">X<span style="font-size:7px">:</span></div>
<div class="t" style="left:853px;top:108.8px;font-size:12px;color:#222;letter-spacing:-0.3px;-webkit-text-stroke:0">Y<span style="font-size:7px">:</span></div>
<div class="t" style="left:866px;top:96.9px;font-size:6.5px;color:#1a1a1a">.0 mm</div>
<div class="t" style="left:866px;top:112.1px;font-size:6.5px;color:#1a1a1a">.0 mm</div>
<div class="t" style="left:877px;top:124.7px;font-size:6.8px;color:#1a1a1a">相对位置</div>
<div class="t" style="left:851.4px;top:169.2px;font-size:6.4px;color:#1a1a1a;letter-spacing:-0.2px">副本:</div>
<div class="t" style="left:870.4px;top:170px;font-size:6.2px;color:#222">1</div>
<div class="t" style="left:942px;top:188.4px;font-size:7.2px;color:#1a1a1a">应用</div>
<!-- SIDE TABS -->
<div class="abs" style="left:972.3px;top:71.6px;width:10.2px;height:355.4px;background:#ececec"></div>
<div class="abs" style="left:972.3px;top:72.4px;width:10.2px;height:45.4px;background:#e2e2e2;border-bottom:0.6px solid #bbb"></div>
<div class="abs" style="left:972.3px;top:119px;width:10.2px;height:31px;background:#cbcbcb"></div>
<div class="abs" style="left:972.3px;top:151px;width:10.2px;height:56.6px;background:#e0e2e0;border-bottom:0.6px solid #bbb"></div>
<div class="abs" style="left:972.3px;top:209px;width:10.2px;height:78px;background:#e0e0e0;border-bottom:0.6px solid #bbb"></div>
<div class="t vt" style="left:981.6px;top:84px;">插入字符</div>
<div class="t vt" style="left:981.6px;top:132.6px;">变换</div>
<div class="t vt" style="left:981.6px;top:168px;letter-spacing:0.3px">对齐与分布</div>
<div class="t vt" style="left:981.6px;top:225px;letter-spacing:0.25px">圆角/扇形角/倒棱角</div>
<svg class="ic" style="left:972px;top:72px" width="11" height="250" viewBox="972 72 11 250"><g fill="none">
<path d="M977.4 74.6 L978.3 77 L980.8 77.1 L978.8 78.7 L979.5 81.2 L977.4 79.8 L975.3 81.2 L976 78.7 L974 77.1 L976.5 77Z" stroke="#333" stroke-width="0.7"/>
<path d="M975.2 123.4 L979 122.4 L980 125.6 L977.4 128.2 L975 126.4" stroke="#444" stroke-width="0.8"/><circle cx="979.4" cy="127.6" r="0.8" fill="#333"/>
<path d="M975.4 160.4 V166 M977.4 161.8 V166 M979.4 163.2 V166" stroke="#4a6a8a" stroke-width="0.9"/>
<rect x="974.8" y="216.6" width="5.6" height="5.8" rx="1.8" fill="#d6ecfa" stroke="#6a5a8a" stroke-width="0.8"/>
<circle cx="977.4" cy="309" r="2.6" stroke="#c4c4c4" stroke-width="0.6"/><path d="M975.8 309 H979 M977.4 307.4 V310.6" stroke="#bdbdbd" stroke-width="0.6"/>
</g></svg>
<!-- PALETTE -->
<svg class="ic" style="left:972px;top:60px" width="28" height="367" viewBox="972 60 28 367">
<rect x="982.5" y="59.5" width="17.5" height="20.7" fill="#f3f3f3"/><rect x="997.6" y="22" width="2.4" height="58.2" fill="#f9fafc"/>
<ellipse cx="991.4" cy="69" rx="0.9" ry="1.7" fill="#111"/>
<rect x="982.5" y="80.20" width="8.9" height="8.92" fill="#ffffff"/><rect x="991.3" y="80.20" width="8.8" height="8.92" fill="#b0bd52"/><rect x="982.5" y="89.07" width="8.9" height="8.92" fill="#141214"/><rect x="991.3" y="89.07" width="8.8" height="8.92" fill="#b9d1a0"/><rect x="982.5" y="97.94" width="8.9" height="8.92" fill="#2e2a34"/><rect x="991.3" y="97.94" width="8.8" height="8.92" fill="#a6c81a"/><rect x="982.5" y="106.82" width="8.9" height="8.92" fill="#4d4858"/><rect x="991.3" y="106.82" width="8.8" height="8.92" fill="#d4e07a"/><rect x="982.5" y="115.69" width="8.9" height="8.92" fill="#6a696e"/><rect x="991.3" y="115.69" width="8.8" height="8.92" fill="#5c5e3c"/><rect x="982.5" y="124.56" width="8.9" height="8.92" fill="#838383"/><rect x="991.3" y="124.56" width="8.8" height="8.92" fill="#8a8a6a"/><rect x="982.5" y="133.43" width="8.9" height="8.92" fill="#9d9d9a"/><rect x="991.3" y="133.43" width="8.8" height="8.92" fill="#c2b8a2"/><rect x="982.5" y="142.30" width="8.9" height="8.92" fill="#bdbbbf"/><rect x="991.3" y="142.30" width="8.8" height="8.92" fill="#c2c06a"/><rect x="982.5" y="151.18" width="8.9" height="8.92" fill="#d2d2da"/><rect x="991.3" y="151.18" width="8.8" height="8.92" fill="#e1dc6a"/><rect x="982.5" y="160.05" width="8.9" height="8.92" fill="#e1dfec"/><rect x="991.3" y="160.05" width="8.8" height="8.92" fill="#f4ea70"/><rect x="982.5" y="168.92" width="8.9" height="8.92" fill="#ebe8f4"/><rect x="991.3" y="168.92" width="8.8" height="8.92" fill="#f6ee8e"/><rect x="982.5" y="177.79" width="8.9" height="8.92" fill="#fcfcfc"/><rect x="991.3" y="177.79" width="8.8" height="8.92" fill="#faf4c8"/><rect x="982.5" y="186.66" width="8.9" height="8.92" fill="#1b2490"/><rect x="991.3" y="186.66" width="8.8" height="8.92" fill="#b8946a"/><rect x="982.5" y="195.54" width="8.9" height="8.92" fill="#12a0e4"/><rect x="991.3" y="195.54" width="8.8" height="8.92" fill="#dca066"/><rect x="982.5" y="204.41" width="8.9" height="8.92" fill="#0f9a3c"/><rect x="991.3" y="204.41" width="8.8" height="8.92" fill="#e2b45e"/><rect x="982.5" y="213.28" width="8.9" height="8.92" fill="#f8e81a"/><rect x="991.3" y="213.28" width="8.8" height="8.92" fill="#f28540"/><rect x="982.5" y="222.15" width="8.9" height="8.92" fill="#e61220"/><rect x="991.3" y="222.15" width="8.8" height="8.92" fill="#f6a648"/><rect x="982.5" y="231.02" width="8.9" height="8.92" fill="#e4108a"/><rect x="991.3" y="231.02" width="8.8" height="8.92" fill="#f5b070"/><rect x="982.5" y="239.90" width="8.9" height="8.92" fill="#c83ca8"/><rect x="991.3" y="239.90" width="8.8" height="8.92" fill="#f8d21a"/><rect x="982.5" y="248.77" width="8.9" height="8.92" fill="#f08a12"/><rect x="991.3" y="248.77" width="8.8" height="8.92" fill="#f8dca0"/><rect x="982.5" y="257.64" width="8.9" height="8.92" fill="#f2b0ae"/><rect x="991.3" y="257.64" width="8.8" height="8.92" fill="#8c6c4a"/><rect x="982.5" y="266.51" width="8.9" height="8.92" fill="#8a6a72"/><rect x="991.3" y="266.51" width="8.8" height="8.92" fill="#b05a36"/><rect x="982.5" y="275.38" width="8.9" height="8.92" fill="#d9caf0"/><rect x="991.3" y="275.38" width="8.8" height="8.92" fill="#c8682e"/><rect x="982.5" y="284.26" width="8.9" height="8.92" fill="#9a86cc"/><rect x="991.3" y="284.26" width="8.8" height="8.92" fill="#f08a5a"/><rect x="982.5" y="293.13" width="8.9" height="8.92" fill="#5a78c8"/><rect x="991.3" y="293.13" width="8.8" height="8.92" fill="#f8b08a"/><rect x="982.5" y="302.00" width="8.9" height="8.92" fill="#7460b4"/><rect x="991.3" y="302.00" width="8.8" height="8.92" fill="#fcd8c0"/><rect x="982.5" y="310.87" width="8.9" height="8.92" fill="#8a80b0"/><rect x="991.3" y="310.87" width="8.8" height="8.92" fill="#a87a78"/><rect x="982.5" y="319.74" width="8.9" height="8.92" fill="#3a5a98"/><rect x="991.3" y="319.74" width="8.8" height="8.92" fill="#d8706a"/><rect x="982.5" y="328.62" width="8.9" height="8.92" fill="#3f4f72"/><rect x="991.3" y="328.62" width="8.8" height="8.92" fill="#c8708a"/><rect x="982.5" y="337.49" width="8.9" height="8.92" fill="#5a80b8"/><rect x="991.3" y="337.49" width="8.8" height="8.92" fill="#e6083a"/><rect x="982.5" y="346.36" width="8.9" height="8.92" fill="#1a88cc"/><rect x="991.3" y="346.36" width="8.8" height="8.92" fill="#f08878"/><rect x="982.5" y="355.23" width="8.9" height="8.92" fill="#a8d4f8"/><rect x="991.3" y="355.23" width="8.8" height="8.92" fill="#e05060"/><rect x="982.5" y="364.10" width="8.9" height="8.92" fill="#a8c8dc"/><rect x="991.3" y="364.10" width="8.8" height="8.92" fill="#d8a0a0"/><rect x="982.5" y="372.98" width="8.9" height="8.92" fill="#9aa0b4"/><rect x="991.3" y="372.98" width="8.8" height="8.92" fill="#8a5a66"/><rect x="982.5" y="381.85" width="8.9" height="8.92" fill="#7c8494"/><rect x="991.3" y="381.85" width="8.8" height="8.92" fill="#a8587e"/><rect x="982.5" y="390.72" width="8.9" height="8.92" fill="#4a5264"/><rect x="991.3" y="390.72" width="8.8" height="8.92" fill="#f4b4cc"/><rect x="982.5" y="399.59" width="8.9" height="8.92" fill="#4a7e7e"/><rect x="991.3" y="399.59" width="8.8" height="8.92" fill="#d09ab8"/><rect x="982.5" y="408.46" width="8.9" height="8.92" fill="#3a9080"/><rect x="991.3" y="408.46" width="8.8" height="8.92" fill="#b09a9c"/><rect x="982.5" y="417.34" width="8.9" height="8.92" fill="#7aa8a8"/><rect x="991.3" y="417.34" width="8.8" height="8.92" fill="#e4c4d8"/><rect x="982.5" y="426.21" width="8.9" height="8.92" fill="#55707a"/><rect x="991.3" y="426.21" width="8.8" height="8.92" fill="#a0607a"/>
<path d="M983.4 81.2 L990.6 88.4 M990.6 81.2 L983.4 88.4" stroke="#333" stroke-width="0.7"/>
<rect x="982.8" y="80.5" width="8.4" height="8.4" fill="none" stroke="#666" stroke-width="0.6"/>
<g stroke="#555" stroke-opacity="0.35" stroke-width="0.5"><path d="M991.3 80.2 V427 M982.5 80.2 V427"/></g>
</svg>
</body>
</html>
